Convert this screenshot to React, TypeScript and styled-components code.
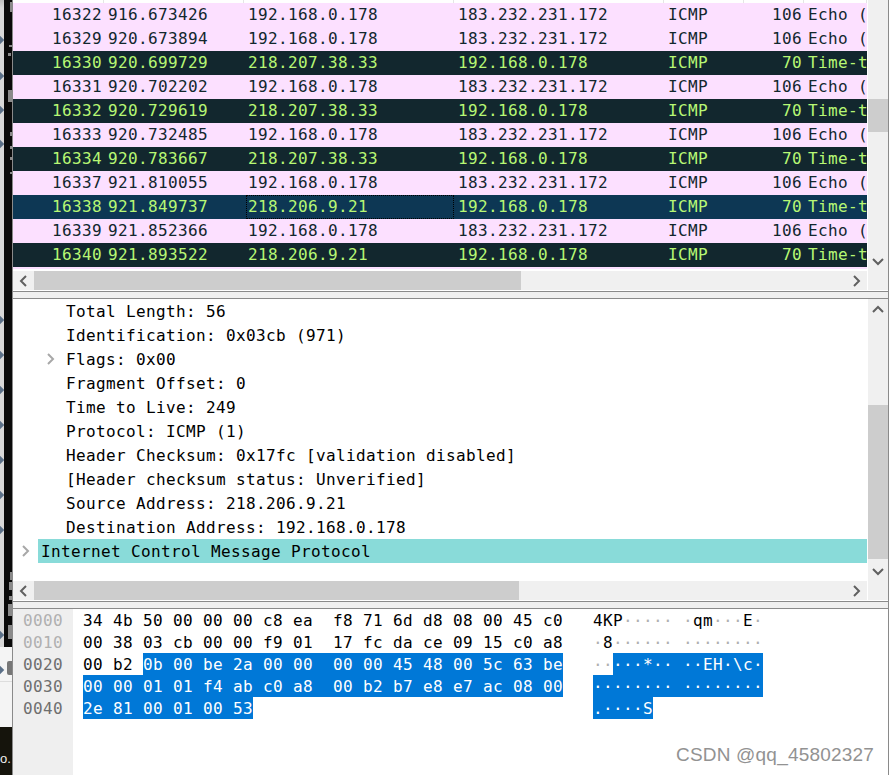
import React from "react";
import styled, { createGlobalStyle } from "styled-components";

const Global = createGlobalStyle`
  html, body { margin: 0; padding: 0; background: #fff; }
  #root { width: 890px; height: 775px; overflow: hidden; }
`;

const mono = `"DejaVu Sans Mono", "Liberation Mono", monospace`;

const Page = styled.div`
  position: relative;
  display: flex;
  width: 890px;
  height: 775px;
  overflow: hidden;
  background: #fff;
  font-family: ${mono};
  font-size: 16px;
  letter-spacing: 0.368px;
`;

/* ---- desktop sliver behind the window ---- */
const Desktop = styled.div`
  position: relative;
  flex: 0 0 12px;
  height: 775px;
  background: linear-gradient(to bottom, #bdbdbd 0, #d8d8d8 8px, #d8d8d8 647px, #f4f4f4 647px, #f4f4f4 727px);
`;
const BlackBand = styled.div`
  position: absolute;
  left: 4px;
  top: 0;
  width: 8px;
  height: 647px;
  background: #0a0a0a;
`;
const PhotoEdge = styled.div`
  position: absolute;
  left: 0;
  top: 727px;
  width: 12px;
  height: 48px;
  background: #15140c;
  color: #f0f0f0;
  font-family: "Liberation Sans", sans-serif;
  font-size: 13px;
  letter-spacing: 0;
  line-height: 14px;
  overflow: hidden;
`;
const PhotoText = styled.div`
  margin: 25px 0 0 0;
`;
const Marker = styled.div`
  position: absolute;
  left: -3px;
  width: 6px;
  height: 6px;
  background: #5b7088;
  transform: rotate(45deg);
`;
const Speck = styled.div`
  position: absolute;
  background: #8a8a8a;
`;
const FolderMark = styled.div`
  position: absolute;
  left: 7px;
  top: 661px;
  width: 5px;
  height: 14px;
  background: #777;
  border-radius: 2px 0 0 2px;
`;
const DesktopRule = styled.div`
  position: absolute;
  left: 0;
  top: 681px;
  width: 12px;
  height: 1px;
  background: #ddd;
`;

/* ---- window ---- */
const Window = styled.div`
  flex: 0 0 877px;
  box-sizing: border-box;
  height: 775px;
  border-left: 1px solid #8a8a8a;
  border-right: 1px solid #8a8a8a;
  display: flex;
  flex-direction: column;
  background: #fff;
`;
const PaneBody = styled.div<{ $h: number }>`
  flex: 0 0 ${(p) => p.$h}px;
  height: ${(p) => p.$h}px;
  display: flex;
  overflow: hidden;
`;
const PaneMain = styled.div`
  flex: 0 0 854px;
  width: 854px;
  overflow: hidden;
  background: #fff;
`;
const Gap = styled.div`
  flex: 0 0 1px;
  background: #fff;
`;

/* ---- packet list ---- */
const HeaderSliver = styled.div`
  height: 3px;
  display: flex;
  background: #fff;
`;
const HeaderCell = styled.div<{ $w: number }>`
  flex: 0 0 ${(p) => p.$w}px;
  box-sizing: border-box;
  border-right: 1px solid #e5e5e5;
`;
const PacketRow = styled.div<{ $kind: "req" | "err" | "sel" }>`
  display: flex;
  height: 24px;
  line-height: 24px;
  white-space: pre;
  background: ${(p) => (p.$kind === "req" ? "#fce0ff" : p.$kind === "err" ? "#12272e" : "#0d3754")};
  color: ${(p) => (p.$kind === "req" ? "#12272e" : "#b7f774")};
`;
const Cell = styled.div<{ $w: number; $right?: boolean; $focus?: boolean }>`
  position: relative;
  flex: 0 0 ${(p) => p.$w}px;
  box-sizing: border-box;
  padding: 0 2px 0 4px;
  text-align: ${(p) => (p.$right ? "right" : "left")};
  &::after {
    content: "";
    display: ${(p) => (p.$focus ? "block" : "none")};
    position: absolute;
    inset: 0 0 0 2px;
    border: 1px dotted #000;
  }
`;
const PinkTail = styled.div`
  height: 2px;
  background: #fce0ff;
`;

/* ---- scrollbars ---- */
const VBar = styled.div`
  flex: 0 0 20px;
  display: flex;
  flex-direction: column;
  background: #f0f0f0;
`;
const VArrow = styled.div`
  flex: 0 0 20px;
  display: flex;
  align-items: center;
  justify-content: center;
`;
const VTrack = styled.div`
  flex: 1 1 auto;
  min-height: 0;
`;
const VThumb = styled.div<{ $top: number; $h: number }>`
  margin-top: ${(p) => p.$top}px;
  height: ${(p) => p.$h}px;
  background: #cdcdcd;
`;
const HBarRow = styled.div`
  flex: 0 0 19px;
  height: 19px;
  display: flex;
  background: #f0f0f0;
`;
const HArrow = styled.div`
  flex: 0 0 21px;
  display: flex;
  align-items: center;
  justify-content: center;
`;
const HThumb = styled.div<{ $w: number }>`
  flex: 0 0 ${(p) => p.$w}px;
  background: #cdcdcd;
`;
const HTrack = styled.div`
  flex: 1 1 auto;
`;
const Corner = styled.div`
  flex: 0 0 20px;
`;
const Rule = styled.div`
  flex: 0 0 1px;
  background: #8a8a8a;
`;
const Splitter = styled.div`
  flex: 0 0 6px;
  background: #f0f0f0;
`;
const WhiteRule = styled.div`
  flex: 0 0 1px;
  background: #fff;
`;

const Chevron = ({ dir, color = "#606060" }: { dir: "l" | "r" | "u" | "d"; color?: string }) => {
  const pts = {
    l: "7,1 2,6 7,11",
    r: "2,1 7,6 2,11",
    u: "1,7 6,2 11,7",
    d: "1,2 6,7 11,2",
  }[dir];
  const horizontal = dir === "l" || dir === "r";
  return (
    <svg width={horizontal ? 9 : 12} height={horizontal ? 12 : 9} viewBox={horizontal ? "0 0 9 12" : "0 0 12 9"}>
      <polyline points={pts} fill="none" stroke={color} strokeWidth="2" />
    </svg>
  );
};

/* ---- packet details ---- */
const TreeRow = styled.div`
  display: flex;
  align-items: stretch;
  height: 24px;
  white-space: pre;
  color: #000;
`;
const Twisty = styled.div<{ $left: number }>`
  flex: 0 0 9px;
  display: flex;
  align-items: center;
  margin-left: ${(p) => p.$left}px;
`;
const TreeText = styled.div<{ $indent: number }>`
  box-sizing: border-box;
  height: 24px;
  padding-top: 1px;
  line-height: 24px;
  margin-left: ${(p) => p.$indent}px;
`;
const HighlightText = styled.div`
  flex: 1 1 auto;
  box-sizing: border-box;
  height: 24px;
  padding: 1px 0 0 3px;
  line-height: 24px;
  margin-left: 8px;
  background: #89dbd9;
`;

/* ---- hex dump ---- */
const HexPane = styled.div`
  flex: 1 1 auto;
  display: flex;
  min-height: 0;
`;
const Gutter = styled.div`
  flex: 0 0 60px;
  box-sizing: border-box;
  padding-left: 10px;
  background: #efefef;
`;
const Offset = styled.div<{ $active?: boolean }>`
  height: 22px;
  line-height: 24px;
  color: ${(p) => (p.$active ? "#6e6e6e" : "#b0b0b0")};
`;
const HexBody = styled.div`
  flex: 1 1 auto;
  padding-left: 10px;
  display: flex;
  flex-direction: column;
`;
const HexRow = styled.div`
  display: flex;
  height: 22px;
  line-height: 24px;
  white-space: pre;
  color: #000;
`;
const HexColumn = styled.div`
  flex: 0 0 510px;
`;
const Sel = styled.span`
  background: #0078d7;
  color: #fff;
  display: inline-block;
  height: 22px;
`;
const Dot = styled.span`
  color: #b0b0b0;
`;

const Watermark = styled.div`
  position: absolute;
  left: 676px;
  top: 744px;
  font-family: "Liberation Sans", sans-serif;
  font-size: 19px;
  line-height: 22px;
  letter-spacing: 0.2px;
  color: #929292;
  text-shadow: 0 0 1px rgba(255, 255, 255, 0.8);
`;

const W = [91, 140, 210, 210, 80, 60, 63];
type Kind = "req" | "err" | "sel";
const R = "192.168.0.178";
const D = "183.232.231.172";
const rows: [string, string, string, string, string, string, Kind][] = [
  ["16322", "916.673426", R, D, "106", "Echo (", "req"],
  ["16329", "920.673894", R, D, "106", "Echo (", "req"],
  ["16330", "920.699729", "218.207.38.33", R, "70", "Time-t", "err"],
  ["16331", "920.702202", R, D, "106", "Echo (", "req"],
  ["16332", "920.729619", "218.207.38.33", R, "70", "Time-t", "err"],
  ["16333", "920.732485", R, D, "106", "Echo (", "req"],
  ["16334", "920.783667", "218.207.38.33", R, "70", "Time-t", "err"],
  ["16337", "921.810055", R, D, "106", "Echo (", "req"],
  ["16338", "921.849737", "218.206.9.21", R, "70", "Time-t", "sel"],
  ["16339", "921.852366", R, D, "106", "Echo (", "req"],
  ["16340", "921.893522", "218.206.9.21", R, "70", "Time-t", "err"],
];

const details: [string, boolean?][] = [
  ["Total Length: 56"],
  ["Identification: 0x03cb (971)"],
  ["Flags: 0x00", true],
  ["Fragment Offset: 0"],
  ["Time to Live: 249"],
  ["Protocol: ICMP (1)"],
  ["Header Checksum: 0x17fc [validation disabled]"],
  ["[Header checksum status: Unverified]"],
  ["Source Address: 218.206.9.21"],
  ["Destination Address: 192.168.0.178"],
];

const markers = [40, 76, 110, 144, 320, 355, 390, 425, 460, 495, 530, 635, 670];
const specks: [number, number, number, number][] = [
  [10, 2, 2, 10], [9, 45, 3, 2], [8, 53, 3, 3], [8, 90, 4, 12], [10, 132, 2, 4], [10, 146, 2, 3],
  [10, 157, 2, 3], [10, 172, 2, 2], [10, 572, 2, 8], [9, 582, 3, 8], [9, 596, 3, 4], [8, 604, 4, 12], [8, 625, 4, 14],
];

const Dots = ({ n }: { n: number }) => <Dot>{"·".repeat(n)}</Dot>;

export default function App() {
  return (
    <Page>
      <Global />
      <Desktop>
        <BlackBand />
        {specks.map(([l, t, w, h], i) => (
          <Speck key={i} style={{ left: l, top: t, width: w, height: h }} />
        ))}
        {markers.map((t) => (
          <Marker key={t} style={{ top: t - 3 }} />
        ))}
        <FolderMark />
        <DesktopRule />
        <PhotoEdge>
          <PhotoText>o.</PhotoText>
        </PhotoEdge>
      </Desktop>

      <Window>
        {/* packet list */}
        <PaneBody $h={271}>
          <PaneMain>
            <HeaderSliver>
              {W.map((w, i) => (
                <HeaderCell key={i} $w={w} />
              ))}
            </HeaderSliver>
            {rows.map(([no, t, s, d, len, info, kind]) => (
              <PacketRow key={no} $kind={kind}>
                <Cell $w={W[0]} $right>{no}</Cell>
                <Cell $w={W[1]}>{t}</Cell>
                <Cell $w={W[2]} $focus={kind === "sel"}>{s}</Cell>
                <Cell $w={W[3]}>{d}</Cell>
                <Cell $w={W[4]}>ICMP</Cell>
                <Cell $w={W[5]} $right>{len}</Cell>
                <Cell $w={W[6]}>{info}</Cell>
              </PacketRow>
            ))}
            <PinkTail />
          </PaneMain>
          <Gap />
          <VBar>
            <VTrack>
              <VThumb $top={99} $h={33} />
            </VTrack>
            <VArrow>
              <Chevron dir="d" />
            </VArrow>
          </VBar>
        </PaneBody>
        <HBarRow>
          <HArrow><Chevron dir="l" /></HArrow>
          <HThumb $w={487} />
          <HTrack />
          <HArrow><Chevron dir="r" /></HArrow>
          <Gap />
          <Corner />
        </HBarRow>
        <WhiteRule />
        <Rule />
        <Splitter />
        <Rule />

        {/* packet details */}
        <PaneBody $h={282}>
          <PaneMain>
            {details.map(([text, expand]) => (
              <TreeRow key={text}>
                {expand ? (
                  <>
                    <Twisty $left={33}><Chevron dir="r" color="#a8a8a8" /></Twisty>
                    <TreeText $indent={11}>{text}</TreeText>
                  </>
                ) : (
                  <TreeText $indent={53}>{text}</TreeText>
                )}
              </TreeRow>
            ))}
            <TreeRow>
              <Twisty $left={8}><Chevron dir="r" color="#a8a8a8" /></Twisty>
              <HighlightText>Internet Control Message Protocol</HighlightText>
            </TreeRow>
          </PaneMain>
          <Gap />
          <VBar>
            <VArrow>
              <Chevron dir="u" />
            </VArrow>
            <VTrack>
              <VThumb $top={86} $h={154} />
            </VTrack>
            <VArrow>
              <Chevron dir="d" />
            </VArrow>
          </VBar>
        </PaneBody>
        <HBarRow>
          <HArrow><Chevron dir="l" /></HArrow>
          <HThumb $w={485} />
          <HTrack />
          <HArrow><Chevron dir="r" /></HArrow>
          <Gap />
          <Corner />
        </HBarRow>
        <WhiteRule />
        <Rule />
        <Splitter />
        <Rule />

        {/* hex dump */}
        <HexPane>
          <Gutter>
            <Offset>0000</Offset>
            <Offset>0010</Offset>
            <Offset $active>0020</Offset>
            <Offset $active>0030</Offset>
            <Offset $active>0040</Offset>
          </Gutter>
          <HexBody>
            <HexRow>
              <HexColumn>34 4b 50 00 00 00 c8 ea  f8 71 6d d8 08 00 45 c0</HexColumn>
              <span>4KP<Dots n={5} /> <Dots n={1} />qm<Dots n={3} />E<Dots n={1} /></span>
            </HexRow>
            <HexRow>
              <HexColumn>00 38 03 cb 00 00 f9 01  17 fc da ce 09 15 c0 a8</HexColumn>
              <span><Dots n={1} />8<Dots n={6} /> <Dots n={8} /></span>
            </HexRow>
            <HexRow>
              <HexColumn>00 b2 <Sel>0b 00 be 2a 00 00  00 00 45 48 00 5c 63 be</Sel></HexColumn>
              <span><Dots n={2} /><Sel>···*·· ··EH·\c·</Sel></span>
            </HexRow>
            <HexRow>
              <HexColumn><Sel>00 00 01 01 f4 ab c0 a8  00 b2 b7 e8 e7 ac 08 00</Sel></HexColumn>
              <span><Sel>········ ········</Sel></span>
            </HexRow>
            <HexRow>
              <HexColumn><Sel>2e 81 00 01 00 53</Sel></HexColumn>
              <span><Sel>.····S</Sel></span>
            </HexRow>
          </HexBody>
        </HexPane>
      </Window>
      <Watermark>CSDN @qq_45802327</Watermark>
    </Page>
  );
}
